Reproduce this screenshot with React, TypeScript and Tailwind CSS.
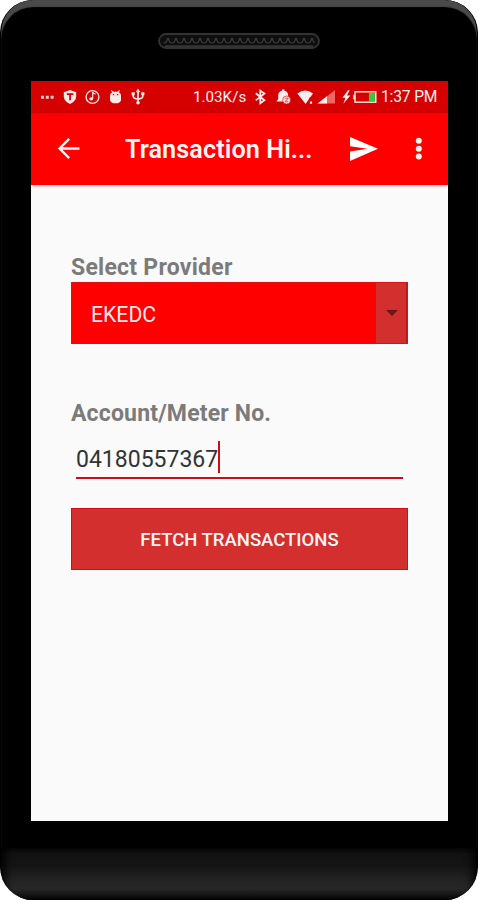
function Speaker() {
  return (
    <svg width="162" height="16" viewBox="0 0 162 16">
      <defs>
        <pattern id="mesh" x="2" y="4" width="8" height="8" patternUnits="userSpaceOnUse">
          <path d="M0.5 1 Q1 6 4 6 Q7 6 7.5 1" fill="none" stroke="#3e3e3e" strokeWidth="1.2" />
        </pattern>
      </defs>
      <rect x="1" y="1" width="160" height="14" rx="7" fill="#0e0e0e" stroke="#333" strokeWidth="1.8" />
      <rect x="5" y="4" width="152" height="8" rx="4" fill="url(#mesh)" />
      <path d="M7 13.2H155" stroke="#343434" strokeWidth="2" />
    </svg>
  );
}

function LeftStatusIcons() {
  return (
    <svg className="shrink-0" width="116" height="32" viewBox="0 0 116 32" fill="#ffe9e7">
      <path d="M10 14.8h3v3h-3zM14.8 14.8h3v3h-3zM19.6 14.8h3v3h-3z" opacity=".85" />
      <path d="M39 9 L45.2 11.2 V15.5 Q45 20.2 39 23 Q33 20.2 32.8 15.5 V11.2 Z" />
      <path d="M35.8 13.2h6.6M39.1 13.2v6" stroke="#d50000" strokeWidth="1.8" />
      <circle cx="61.5" cy="16" r="6.4" fill="none" stroke="#ffe0de" strokeWidth="1.4" />
      <ellipse cx="60.2" cy="17.8" rx="2" ry="1.6" />
      <path d="M61.7 17.5V11.5l2.8 1.8" fill="none" stroke="#ffe9e7" strokeWidth="1.2" />
      <path d="M79 14 Q79.3 11.9 81 11.4 L79.9 8.8 L82.8 10.8 H86.2 L89.1 8.8 L88 11.4 Q89.7 11.9 90 14 V19.3 Q89.5 22 86.8 22.3 H82.2 Q79.5 22 79 19.3 Z" />
      <path d="M81.8 13.7h1.4M85.8 13.7h1.4" stroke="#d50000" strokeWidth="1.2" />
      <path d="M107 10.5V22M102.2 12.5v2.5q0 2.8 4.8 3q4.8-.2 4.8-3V12.5" fill="none" stroke="#ffe9e7" strokeWidth="1.7" />
      <path d="M107 7.6l2.4 3.6h-4.8zM100.6 11.3h3.2v3h-3.2zM110.2 11.3h3.2v3h-3.2z" />
      <circle cx="107" cy="21.8" r="1.8" />
    </svg>
  );
}

function RightStatusIcons() {
  return (
    <svg className="shrink-0" width="131" height="32" viewBox="250 0 131 32" fill="#ffeceb">
      <path d="M255.8 12.2l8.6 7-4.1 3V9.8l4.1 2.8-8.6 6.8" fill="none" stroke="#ffeceb" strokeWidth="1.8" />
      <path d="M276.3 20.6h13.2l-1.4-2.4v-4.2q-.2-3.5-3.6-4.2v-1.2h-2.6v1.2q-3.5.8-3.7 4.2v4z" />
      <circle cx="286.6" cy="19" r="4" fill="#ffdedc" stroke="#d50000" strokeWidth=".6" />
      <path d="M285.1 17.3h3l-3 3.5h3" fill="none" stroke="#d53030" strokeWidth=".8" />
      <path d="M297.3 12.6q7.8-6.4 15.8 0L308.3 19l-2.7 3.9z" />
      <path d="M309.3 16.5h5v7h-5z" fill="#d50000" />
      <path d="M311 20.4v2.3" stroke="#ffeceb" strokeWidth="2.2" />
      <path d="M317.6 22.6h17.4V9z" fill="#ef6662" />
      <path d="M317.6 22.6h9.4v-7.3z" />
      <path d="M348 9.2l-5.6 7.6h3l-2 6 7-8.3h-3.4l2.7-5.3z" />
      <rect x="355" y="10.8" width="20.8" height="10.4" fill="#d50000" stroke="#ffeceb" strokeWidth="1.4" />
      <path d="M353.3 13.7h1.8v4.6h-1.8z" />
      <path d="M368.9 12h6v8h-6z" fill="#2cd044" />
    </svg>
  );
}

function StatusBar() {
  return (
    <div className="flex h-8 items-center bg-[#d50000] text-[#fff0ef]">
      <LeftStatusIcons />
      <span className="ml-[46px] w-[57px] whitespace-nowrap text-[15.2px] leading-8">1.03K/s</span>
      <RightStatusIcons />
      <span className="whitespace-nowrap text-[15.6px] leading-8 tracking-[-0.15px]">1:37 PM</span>
    </div>
  );
}

function AppBar() {
  return (
    <div className="flex h-[72px] items-center bg-[#ff0000] text-white shadow-[0_1px_3px_rgba(0,0,0,0.25)]">
      <svg className="ml-[25px] shrink-0" width="26" height="28" viewBox="0 0 26 28" fill="none" stroke="#ffeeed" strokeWidth="2.4">
        <path d="M23.5 13.5H4M13.2 3.8L3.6 13.5l9.6 9.7" />
      </svg>
      <h1 className="ml-[43px] w-[222px] whitespace-nowrap pt-[2px] text-[25.2px] font-semibold tracking-[0.1px] text-[#fff4f3]">Transaction Hi...</h1>
      <svg className="shrink-0" width="32" height="30" viewBox="0 0 32 30" fill="#fff">
        <path d="M3 3L31 14.8 3 27V17.6L20.5 14.8 3 12.2z" />
      </svg>
      <svg className="ml-[35px] shrink-0" width="10" height="28" viewBox="0 0 10 28" fill="#ffeeed">
        <circle cx="4.8" cy="5.8" r="3" />
        <circle cx="4.8" cy="13.7" r="3" />
        <circle cx="4.8" cy="21.6" r="3" />
      </svg>
    </div>
  );
}

export default function App() {
  return (
    <div className="h-[900px] w-[478px] overflow-hidden bg-white font-[Roboto,sans-serif]">
      <div className="flex h-[900px] flex-col overflow-hidden rounded-[33px] border-x border-black bg-black shadow-[inset_0_7px_1px_#4a4a4a]">
        <div className="flex h-[81px] shrink-0 justify-center pt-[33px]">
          <Speaker />
        </div>
        <main className="ml-[30px] flex h-[740px] w-[417px] shrink-0 flex-col bg-[#fafafa]">
          <StatusBar />
          <AppBar />
          <div className="px-10 pt-[68px]">
            <div className="h-[29px] whitespace-nowrap text-[23px] font-bold leading-[29px] tracking-[0.25px] text-[#7b7b7b]">Select Provider</div>
            <div className="flex h-[62px] w-[337px] border border-[#df1010] bg-[#ff0000]">
              <span className="flex-1 pl-[19px] text-[21.2px] leading-[63px] text-[#ffe9e8]">EKEDC</span>
              <span className="flex w-[31px] items-center justify-center border-r border-[#bd151a] bg-[#d32f2f] pl-0.5">
                <svg width="12" height="6" viewBox="0 0 12 6" fill="#65191a">
                  <path d="M0 0h12L6 6z" />
                </svg>
              </span>
            </div>
            <div className="mt-[55px] h-[29px] whitespace-nowrap text-[23px] font-bold leading-[30px] tracking-[0.17px] text-[#7b7b7b]">Account/Meter No.</div>
            <div className="ml-[5px] mt-3 flex h-[39px] w-[327px] items-start border-b-2 border-[#c90d14]">
              <span className="text-[23px] leading-[39px] text-[#333]">04180557367</span>
              <span className="mt-px h-8 w-0.5 bg-[#d00d14]" />
            </div>
            <button className="mt-[29px] block h-[62px] w-[337px] border border-[#ca1119] bg-[#d32f2f] pt-[3px] text-[18.5px] font-medium text-[#fff4f3]">FETCH TRANSACTIONS</button>
          </div>
        </main>
        <div className="h-[27px] shrink-0" />
        <div className="h-[52px] shrink-0 bg-[linear-gradient(#080808,#121212_12%,#141414_33%,#242424_65%,#272727_78%,#111_96%,#000)] shadow-[inset_8px_-2px_10px_-4px_#000,inset_-8px_-2px_10px_-4px_#000]" />
      </div>
    </div>
  );
}
